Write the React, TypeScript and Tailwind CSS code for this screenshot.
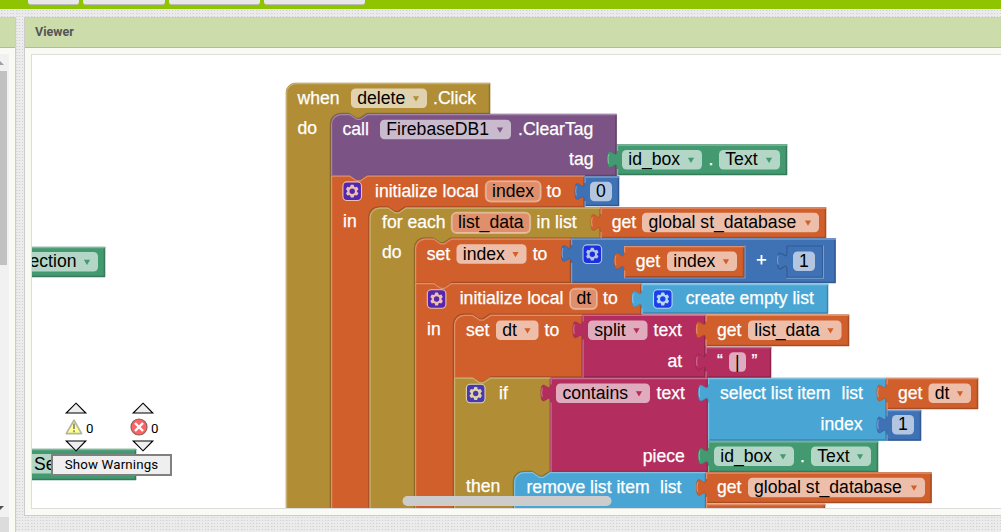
import React from "react";

const OLIVE = "#b18e35";
const PURPLE = "#7c5385";
const ORANGE = "#d15f2c";
const GREEN = "#439970";
const BLUE = "#3f71b5";
const SKY = "#49a6d4";
const PINK = "#b32d5e";

const shades: Record<string, [string, string]> = {
  [OLIVE]: ["#c9b072", "#8e722a"],
  [PURPLE]: ["#a387aa", "#63426a"],
  [ORANGE]: ["#e08f6b", "#a74c23"],
  [GREEN]: ["#7cba9c", "#367a5a"],
  [BLUE]: ["#799cce", "#325a91"],
  [SKY]: ["#80c1e1", "#3a85aa"],
  [PINK]: ["#ca6c8e", "#8f244b"],
};

const NOTCH = "l7.2,4.8 h3.6 l7.2,-4.8";
const NOTCH_BACK = "l-7.2,4.8 h-3.6 l-7.2,-4.8";
const TAB_UP = "c0,-12 -9.6,9.6 -9.6,-9 s9.6,3 9.6,-9";

type BlockProps = {
  x: number;
  y: number;
  r: number;
  b: number;
  color: string;
  kind?: "value" | "stack" | "hat";
  round?: boolean;
  next?: boolean;
  arm?: { x: number; bottom: number };
};

function Block({ x, y, r, b, color, kind = "value", round, next, arm }: BlockProps) {
  const [light, dark] = shades[color];
  let edge: string;
  let shine: string;
  const bottom = arm ? arm.bottom : b;
  if (kind === "value") {
    edge = `M${x},${b} V${y + 24} ${TAB_UP} V${y} H${r}`;
    shine = `M${x},${b} V${y + 24} M${x - 8.8},${y + 18.5} q-1.4,-4 0,-9.5 M${x},${y + 6} V${y} H${r}`;
  } else {
    const corner = round || kind === "hat" ? `V${y + 9.6} a9.6,9.6 0 0 1 9.6,-9.6` : `V${y}`;
    edge = `M${x},${bottom} ${corner} ${kind === "stack" ? `H${x + 18} ${NOTCH}` : ""} H${r}`;
    shine = edge;
  }
  const close = arm
    ? `V${b} H${arm.x + 36} ${NOTCH_BACK} H${arm.x + 9.6} a9.6,9.6 0 0 0 -9.6,9.6 V${arm.bottom} Z`
    : next
      ? `V${b} H${x + 36} ${NOTCH_BACK} H${x} Z`
      : `V${b} Z`;
  const body = `${edge} ${close}`;
  return (
    <g>
      <path d={body} fill={color} stroke={dark} strokeWidth={0.5} />
      <path d={`M${r - 0.6},${y + 1} V${b - 0.6} H${arm ? arm.x + 36 : next ? x + 36 : x + 1}`} fill="none" stroke={dark} strokeWidth={1.3} />
      {arm && (
        <path
          d={`M${arm.x + 36},${b - 0.6} ${NOTCH_BACK} H${arm.x + 9.6} a10,10 0 0 0 -10.2,9.6 V${arm.bottom}`}
          fill="none"
          stroke={dark}
          strokeWidth={1.4}
        />
      )}
      <path d={shine} transform="translate(0.6 0.6)" fill="none" stroke={light} strokeWidth={1.2} />
    </g>
  );
}

function Label({ x, y, children, fill = "#fff" }: { x: number; y: number; children: string; fill?: string }) {
  return (
    <text x={x} y={y} fill={fill} stroke={fill} strokeWidth={fill === "#fff" ? 0.25 : 0}>
      {children}
    </text>
  );
}

type FieldProps = { x: number; y: number; w: number; color?: string; text: string; tx?: number };

function Dropdown({ x, y, w, color, text, tx = 6.3 }: FieldProps) {
  const cx = x + w - 11;
  return (
    <g>
      <rect x={x} y={y} width={w} height={19.5} rx={4.5} fill="#fff" fillOpacity={0.6} />
      {text && <Label x={x + tx} y={y + 15.4} fill="#000">{text}</Label>}
      <path d={`M${cx - 3.1},${y + 7.8} h6.2 l-3.1,5.2 Z`} fill={color} />
    </g>
  );
}

function Value({ x, y, w, text, tx = 6 }: FieldProps) {
  return (
    <g>
      <rect x={x} y={y} width={w} height={19.5} rx={4.5} fill="#fff" fillOpacity={0.6} />
      <Label x={x + tx} y={y + 15.4} fill="#000">{text}</Label>
    </g>
  );
}

function NameField({ x, y, w, text }: FieldProps) {
  return (
    <g>
      <rect x={x} y={y} width={w} height={20.4} rx={5} fill={ORANGE} />
      <rect x={x} y={y} width={w} height={20.4} rx={5} fill="#fff" fillOpacity={0.3} stroke="#fff" strokeOpacity={0.4} strokeWidth={1.8} />
      <Label x={x + 6.4} y={y + 15.5} fill="#000">{text}</Label>
    </g>
  );
}

function Gear({ x, y, fill, ink }: { x: number; y: number; fill: string; ink: string }) {
  return (
    <g transform={`translate(${x} ${y})`}>
      <rect x={-9.3} y={-9.3} width={18.6} height={18.6} rx={4} fill={fill} stroke={ink} strokeWidth={1.1} />
      {[0, 60, 120, 180, 240, 300].map((a) => (
        <path key={a} d="M-2.3,-3.6 L-1.4,-6.4 H1.4 L2.3,-3.6 Z" fill={ink} transform={`rotate(${a})`} />
      ))}
      <circle r={3.7} fill="none" stroke={ink} strokeWidth={2} />
    </g>
  );
}

function Counter({ x, children }: { x: number; children: React.ReactNode }) {
  return (
    <g>
      <path d={`M${x},403.2 l9.8,9.8 h-19.6 Z`} fill="#eee" stroke="#000" strokeWidth={1.1} />
      <path d={`M${x},450.8 l9.8,-9.8 h-19.6 Z`} fill="#eee" stroke="#000" strokeWidth={1.1} />
      {children}
    </g>
  );
}

function Workspace() {
  const end = 530;
  return (
    <svg className="block h-full w-full" viewBox="32 55 969 453" fontFamily='"Liberation Sans", sans-serif' fontSize={17.6}>
      <Block x={-20} y={247} r={105} b={277} color={GREEN} />
      <Dropdown x={-10} y={252} w={108} color={GREEN} text="" />
      <Label x={29.5} y={267} fill="#000">ection</Label>
      <Block x={-20} y={449} r={136} b={480} color={GREEN} />
      <rect x={20} y={454} width={80} height={19.5} fill="#fff" fillOpacity={0.6} />
      <Label x={34} y={470} fill="#000">Se</Label>

      <Block kind="hat" x={286} y={83} r={490} b={114} color={OLIVE} arm={{ x: 331, bottom: end }} />
      <Label x={297.5} y={104}>when</Label>
      <Dropdown x={351} y={88.5} w={76} color={OLIVE} text="delete" />
      <Label x={433} y={104}>.Click</Label>
      <Label x={297.5} y={134}>do</Label>

      <Block kind="stack" round next x={331} y={114} r={616.5} b={176} color={PURPLE} />
      <Label x={342.5} y={135}>call</Label>
      <Dropdown x={380} y={119.8} w={131} color={PURPLE} text="FirebaseDB1" />
      <Label x={518} y={135}>.ClearTag</Label>
      <Label x={569} y={165}>tag</Label>
      <Block x={617} y={144.5} r={787} b={175} color={GREEN} />
      <Dropdown x={622} y={150} w={80} color={GREEN} text="id_box" />
      <Label x={708.5} y={165}>.</Label>
      <Dropdown x={719} y={150} w={61} color={GREEN} text="Text" />

      <Block kind="stack" x={331} y={175.5} r={584.5} b={207.5} color={ORANGE} arm={{ x: 369.5, bottom: end }} />
      <Gear x={352.2} y={191.2} fill="#5427ae" ink="#ecc0ad" />
      <Label x={375} y={196.7}>initialize local</Label>
      <NameField x={485.7} y={181.2} w={55} text="index" />
      <Label x={546.5} y={196.7}>to</Label>
      <Label x={343} y={227}>in</Label>
      <Block x={584.5} y={176.5} r={619} b={206} color={BLUE} />
      <Value x={590} y={181.7} w={22} text="0" />

      <Block kind="stack" round x={369.5} y={207.5} r={600.5} b={238.5} color={OLIVE} arm={{ x: 415, bottom: end }} />
      <Label x={382} y={228}>for each</Label>
      <NameField x={451.7} y={212.6} w={78.5} text="list_data" />
      <Label x={536.5} y={228}>in list</Label>
      <Label x={382} y={258}>do</Label>
      <Block x={600.5} y={207.5} r={826} b={238} color={ORANGE} />
      <Label x={611.7} y={228}>get</Label>
      <Dropdown x={642} y={212.8} w={177} color={ORANGE} text="global st_database" tx={6.5} />

      <Block kind="stack" round next x={415} y={238.5} r={571} b={283} color={ORANGE} />
      <Label x={426.7} y={259.7}>set</Label>
      <Dropdown x={456.5} y={244.3} w={70} color={ORANGE} text="index" />
      <Label x={532.7} y={259.7}>to</Label>
      <Block x={571} y={238.5} r={835.5} b={283} color={BLUE} />
      <Gear x={592.3} y={254.2} fill="#1b2ee0" ink="#b2c6e4" />
      <path d="M624,277.8 H745 V245.5" fill="none" stroke="#799cce" strokeWidth={1.2} />
      <Block x={624} y={246} r={744} b={277.2} color={ORANGE} />
      <Label x={635.7} y={266.8}>get</Label>
      <Dropdown x={667} y={251.5} w={70} color={ORANGE} text="index" />
      <path d="M756.8,259.8 h9.4 M761.5,255.1 v9.4" fill="none" stroke="#fff" strokeWidth={1.8} />
      <path d={`M787,277.4 V270 ${TAB_UP} V246 H822.5 V277.4 Z`} fill={BLUE} stroke="#325a91" strokeWidth={1.1} />
      <path d="M786.5,278.3 H823.5 V245.5 M778.2,264.5 q-1.4,-4 0,-9" fill="none" stroke="#799cce" strokeWidth={1.1} />
      <Value x={793} y={251.5} w={22} text="1" />

      <Block kind="stack" x={415} y={283} r={641.5} b={314.8} color={ORANGE} arm={{ x: 454, bottom: end }} />
      <Gear x={436.6} y={299} fill="#5427ae" ink="#ecc0ad" />
      <Label x={459.7} y={304}>initialize local</Label>
      <NameField x={570} y={288.7} w={27} text="dt" />
      <Label x={603} y={304}>to</Label>
      <Label x={427} y={334.7}>in</Label>
      <Block x={641.5} y={284} r={828} b={313.5} color={SKY} />
      <Gear x={662.8} y={299} fill="#1d3fe8" ink="#b5dbee" />
      <Label x={685.8} y={304}>create empty list</Label>

      <Block kind="stack" round next x={454} y={314.8} r={582.5} b={377.5} color={ORANGE} />
      <Label x={466} y={335.8}>set</Label>
      <Dropdown x={496} y={320.5} w={42.5} color={ORANGE} text="dt" />
      <Label x={544.5} y={335.8}>to</Label>
      <Block x={582.5} y={314.8} r={705.5} b={377.5} color={PINK} />
      <Dropdown x={588} y={320.5} w={59.5} color={PINK} text="split" />
      <Label x={653.5} y={335.8}>text</Label>
      <Label x={667.5} y={366.7}>at</Label>
      <Block x={705.5} y={314.8} r={849} b={346} color={ORANGE} />
      <Label x={717} y={335.8}>get</Label>
      <Dropdown x={748} y={320.5} w={93.5} color={ORANGE} text="list_data" />
      <Block x={705.5} y={347} r={771} b={377.5} color={PINK} />
      <Label x={717} y={367}>“</Label>
      <Value x={729} y={352.2} w={17} text="|" />
      <Label x={751.5} y={367}>”</Label>

      <Block kind="stack" x={454} y={377.5} r={550.5} b={472} color={OLIVE} arm={{ x: 514, bottom: end }} />
      <Gear x={475.7} y={393.5} fill="#4939af" ink="#e0d2ae" />
      <Label x={499} y={398.7}>if</Label>
      <Label x={466} y={491.7}>then</Label>
      <Block x={550.5} y={378} r={708} b={472} color={PINK} />
      <Dropdown x={556} y={383.5} w={94} color={PINK} text="contains" tx={6.5} />
      <Label x={656.5} y={398.7}>text</Label>
      <Label x={642.7} y={461.7}>piece</Label>
      <Block x={708} y={378} r={886.5} b={440.5} color={SKY} />
      <Label x={720} y={398.7}>select list item</Label>
      <Label x={841.5} y={398.7}>list</Label>
      <Label x={820.5} y={429.7}>index</Label>
      <Block x={886.5} y={378} r={978} b={409} color={ORANGE} />
      <Label x={898} y={398.7}>get</Label>
      <Dropdown x={928.5} y={383.5} w={42.5} color={ORANGE} text="dt" />
      <Block x={886.5} y={410} r={921} b={440.5} color={BLUE} />
      <Value x={892} y={415} w={22} text="1" />
      <Block x={708} y={441.3} r={878} b={472} color={GREEN} />
      <Dropdown x={714} y={446.5} w={80} color={GREEN} text="id_box" />
      <Label x={800} y={461.7}>.</Label>
      <Dropdown x={811} y={446.5} w={60} color={GREEN} text="Text" />

      <Block kind="stack" round x={514} y={472} r={706} b={end} color={SKY} />
      <Label x={526.5} y={492.8}>remove list item</Label>
      <Label x={660} y={492.8}>list</Label>
      <Block x={706} y={504} r={825} b={end} color={ORANGE} />
      <Block x={706} y={472.5} r={931.5} b={503} color={ORANGE} />
      <Label x={717} y={492.8}>get</Label>
      <Dropdown x={748} y={477.8} w={177} color={ORANGE} text="global st_database" tx={6} />

      <rect x={402.5} y={496} width={209} height={10} rx={5} fill="#ccc" />

      <g fontFamily="Roboto, sans-serif" fontSize={13.3}>
        <Counter x={76}>
          <path d="M74,420.2 L81.6,433.6 H66.2 Z" fill="#ffff8c" stroke="#b5b5a5" strokeWidth={1.7} strokeLinejoin="round" />
          <path d="M74,423.5 v5.5 M74,430.3 v2" stroke="#96967c" strokeWidth={1.9} />
          <text x={86} y={433.2} fill="#000">0</text>
        </Counter>
        <Counter x={143}>
          <circle cx={139} cy={427} r={8} fill="#ff6262" stroke="#8b6060" strokeWidth={1.2} />
          <path d="M135,423 l8,8 M143,423 l-8,8" stroke="#fff" strokeWidth={2.4} />
          <text x={151} y={433.2} fill="#000">0</text>
        </Counter>
      </g>
    </svg>
  );
}

const weave =
  "bg-[#ebebeb] bg-[image:radial-gradient(#d2d2d2_0.6px,transparent_0.8px),radial-gradient(#dedede_0.6px,transparent_0.8px)] bg-[size:3px_3px,5px_3px]";

export default function App() {
  return (
    <div className={`flex h-[532px] w-[1001px] flex-col overflow-hidden ${weave}`}>
      <header className="flex h-[9px] shrink-0 gap-1 bg-[#8fc400] pl-7">
        <div className="h-[5px] w-[51px] rounded-b-[3px] border-b border-[#bbb] bg-[#e8e8e8]" />
        <div className="h-[5px] w-[82px] rounded-b-[3px] border-b border-[#bbb] bg-[#e8e8e8]" />
        <div className="h-[5px] w-[91px] rounded-b-[3px] border-b border-[#bbb] bg-[#e8e8e8]" />
        <div className="h-[5px] w-[101px] rounded-b-[3px] border-b border-[#bbb] bg-[#e8e8e8]" />
      </header>
      <div className="flex min-h-0 flex-1 pt-2">
        <aside className="flex w-4 shrink-0 flex-col border-t border-r border-[#ccc] bg-[#f9faf3]">
          <div className="h-[30px] shrink-0 border-b border-[#b4b9a6] bg-[#ccdcab]" />
          <div className="mt-[6px] flex w-[9px] flex-1 flex-col bg-[#f1f1f1]">
            <svg className="h-[17px] w-[9px] shrink-0" viewBox="0 0 9 17">
              <path d="M-4,11 L0,7 L4,11 Z" fill="#a0a0a0" />
            </svg>
            <div className="h-[194px] w-[7px] bg-[#c1c1c1]" />
            <div className="flex-1" />
            <svg className="h-[17px] w-[9px] shrink-0" viewBox="0 0 9 17">
              <path d="M-4,6 L0,10 L4,6 Z" fill="#505050" />
            </svg>
            <div className="h-[15px] bg-[#dcdcdc]" />
          </div>
        </aside>
        <main className="ml-2 flex h-[499px] min-w-0 flex-1 flex-col border-y border-l border-[#ccc] bg-[#f9faf3]">
          <div className="flex h-[30px] shrink-0 items-center border-b border-[#b4b9a6] bg-[#ccdcab] pl-[10px] font-['Roboto',sans-serif] text-[12.5px] font-bold text-[#555]">
            Viewer
          </div>
          <div className="relative mt-[6px] ml-[6px] h-[455px] overflow-hidden border-y border-l border-[#ddd] bg-white">
            <Workspace />
            <button className="absolute top-[399px] left-[19px] flex h-[22px] w-[121px] items-center justify-center border-2 border-[#808080] bg-[#efefef] font-['Roboto',sans-serif] text-[13.3px] tracking-[0.15px] whitespace-nowrap text-black">
              Show Warnings
            </button>
          </div>
        </main>
      </div>
    </div>
  );
}
